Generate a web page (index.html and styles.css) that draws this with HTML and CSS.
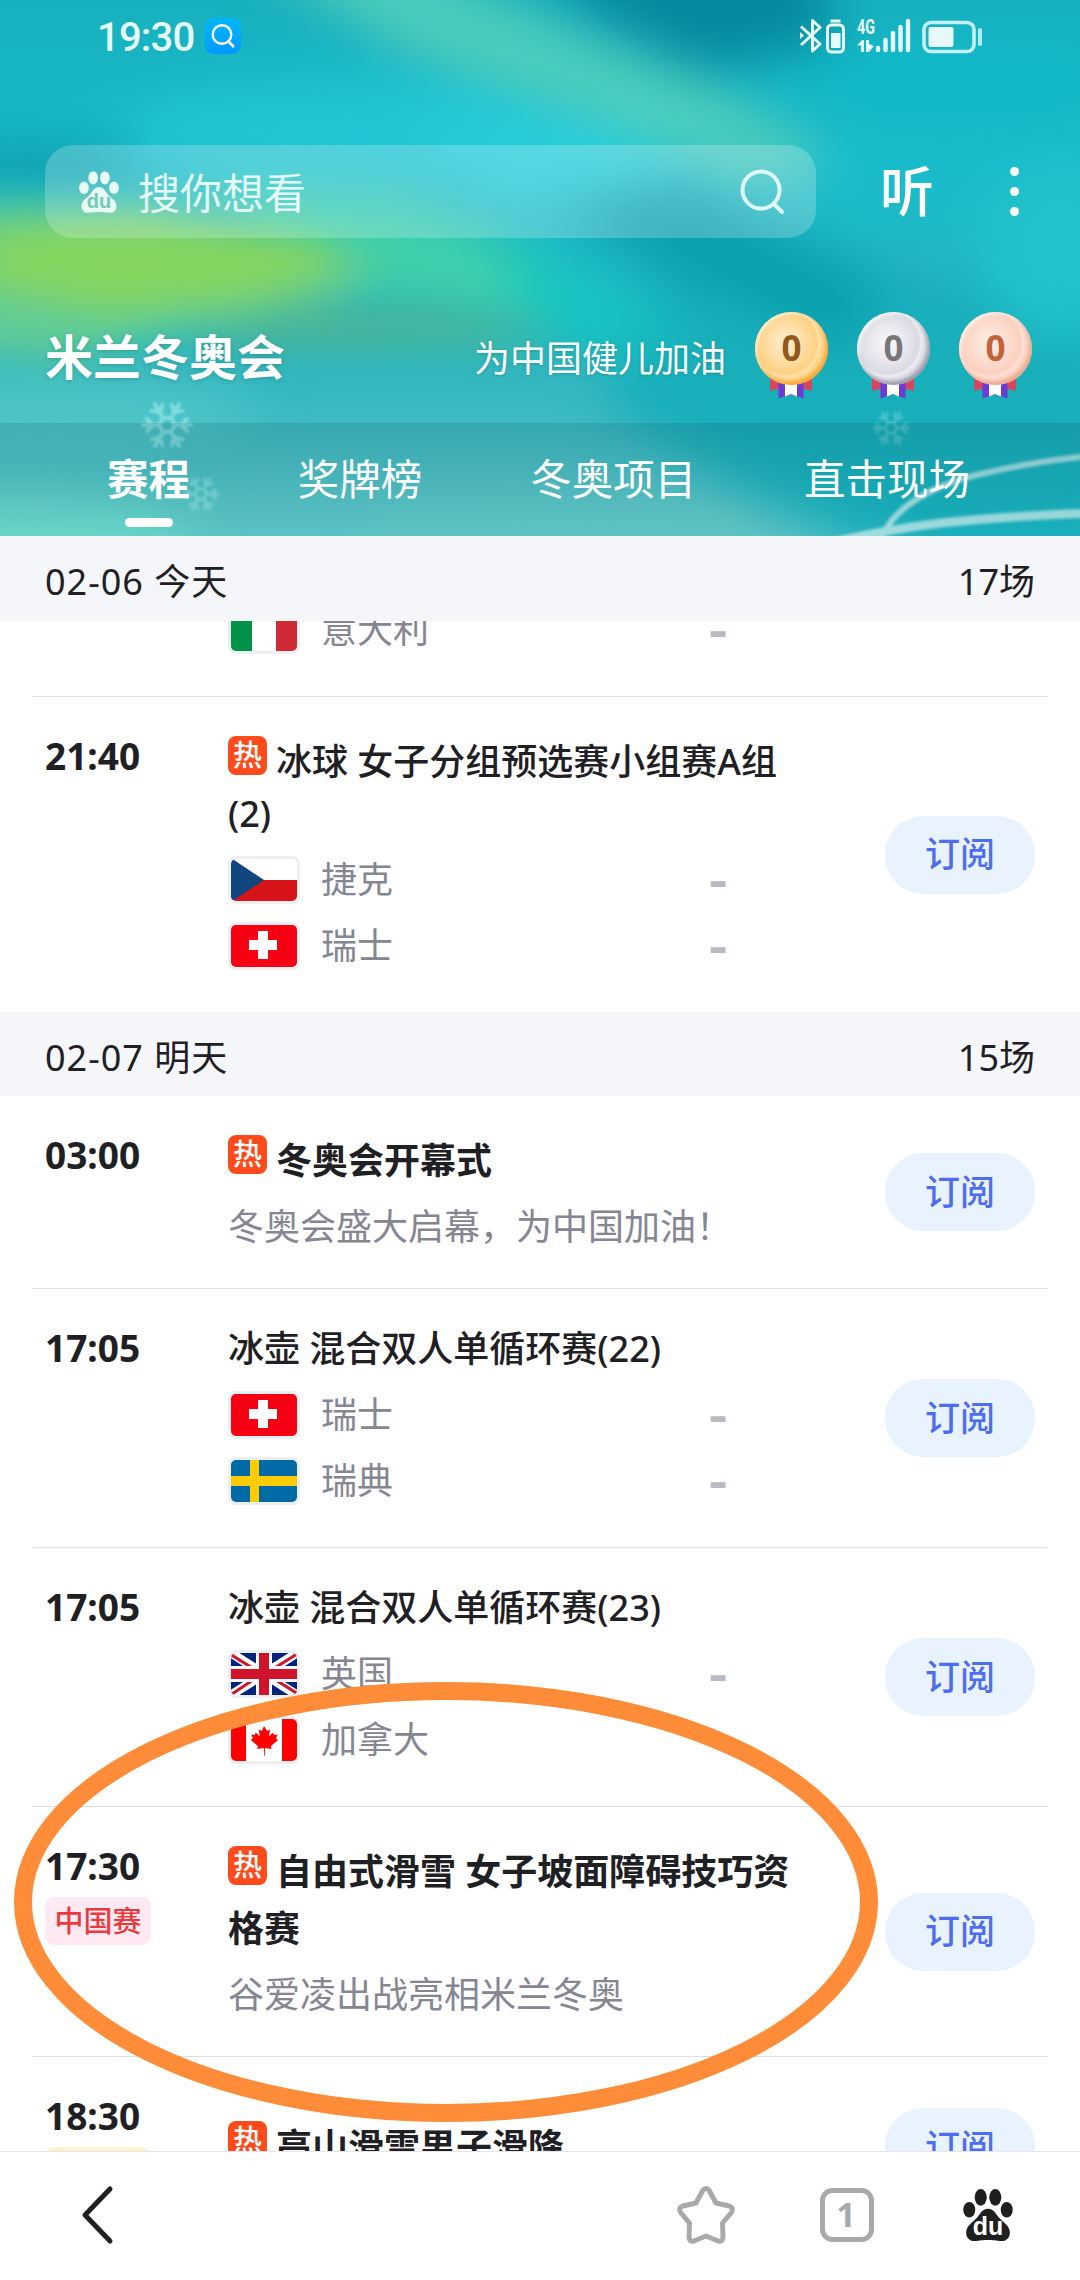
FILE: index.html
```html
<!DOCTYPE html>
<html lang="zh-CN">
<head>
  <meta charset="UTF-8">
  <meta name="viewport" content="width=device-width, initial-scale=1.0">
  <title>米兰冬奥会</title>
  <link rel="stylesheet" href="styles.css">
</head>
<body>
  <!-- Shared shapes: flags, paw logo, snowflake, medal ribbon -->
  <svg class="defs" aria-hidden="true">
    <symbol id="flag-italy" viewBox="0 0 66 42">
      <rect width="66" height="42" fill="#fff"/>
      <rect width="21" height="42" fill="#009246"/>
      <rect x="45" width="21" height="42" fill="#ce2b37"/>
    </symbol>
    <symbol id="flag-czech" viewBox="0 0 66 42">
      <rect width="66" height="42" fill="#fff"/>
      <rect y="21" width="66" height="21" fill="#d7141a"/>
      <path d="M0 -1L33 21L0 43Z" fill="#11457e"/>
    </symbol>
    <symbol id="flag-swiss" viewBox="0 0 66 42">
      <rect width="66" height="42" fill="#f60014"/>
      <path d="M27 6h10v9h9v10h-9v9h-10v-9h-9v-10h9z" fill="#fff"/>
    </symbol>
    <symbol id="flag-sweden" viewBox="0 0 66 42">
      <rect width="66" height="42" fill="#006aa7"/>
      <path d="M19 0h9v16h38v10h-38v16h-9v-16h-19v-10h19z" fill="#fecc00"/>
    </symbol>
    <symbol id="flag-uk" viewBox="0 0 66 42">
      <rect width="66" height="42" fill="#00247d"/>
      <path d="M0 0L66 42M66 0L0 42" stroke="#fff" stroke-width="9"/>
      <path d="M-1 1L27 18.5M42 16L66 1M67 41L40 24M25 25L1 41" stroke="#cf142b" stroke-width="3"/>
      <path d="M33 0V42M0 21H66" stroke="#fff" stroke-width="16"/>
      <path d="M33 0V42M0 21H66" stroke="#cf142b" stroke-width="10"/>
    </symbol>
    <symbol id="flag-canada" viewBox="0 0 66 42">
      <rect width="66" height="42" fill="#fff"/>
      <rect width="15" height="42" fill="#f00"/>
      <rect x="51" width="15" height="42" fill="#f00"/>
      <path d="M33 7l3 5 3-1.500-1 7 4-4 1 2.500 3.500-.5-1.500 4 2 1.500-7 6 .5 3-6.500-1-.3 8h-.6l-.3-8-6.500 1 .5-3-7-6 2-1.500-1.500-4 3.500.5 1-2.500 4 4-1-7 3 1.500z" fill="#f00"/>
    </symbol>
    <symbol id="paw" viewBox="0 0 48 50">
      <ellipse cx="17" cy="8" rx="5.800" ry="8"/>
      <ellipse cx="31" cy="8" rx="5.800" ry="8"/>
      <ellipse cx="6" cy="20" rx="5.800" ry="7.500"/>
      <ellipse cx="42" cy="20" rx="5.800" ry="7.500"/>
      <path d="M24 19c5 0 7 4 10 8 4 5 11 8 11 15 0 6-5 9-10 8-4-.6-7-1-11-1s-7 .4-11 1c-5 1-10-2-10-8 0-7 7-10 11-15 3-4 5-8 10-8z"/>
    </symbol>
    <symbol id="snowflake" viewBox="-26 -26 52 52">
      <g fill="none" stroke="currentColor" stroke-width="4" stroke-linecap="round">
        <path d="M8 0L4 7H-4L-8 0L-4 -7H4Z"/>
        <g id="snow-arm"><path d="M8 0H24M14 0l6 -6M14 0l6 6"/></g>
        <use href="#snow-arm" transform="rotate(60)"/>
        <use href="#snow-arm" transform="rotate(120)"/>
        <use href="#snow-arm" transform="rotate(180)"/>
        <use href="#snow-arm" transform="rotate(240)"/>
        <use href="#snow-arm" transform="rotate(300)"/>
      </g>
    </symbol>
    <symbol id="ribbon" viewBox="0 0 44 24">
      <path d="M1 0h42v13l-6-2-6 2H13l-6-2-6 2z" fill="#d9455f"/>
      <path d="M9.500 4h25v16.500l-6-2-6.500-2-6.500 2-6 2z" fill="#6b3bd6"/>
      <path d="M16 4h12v14.500l-6-2.500-6 2.500z" fill="#fff"/>
    </symbol>
  </svg>

  <div class="phone">
    <header class="header">
      <!-- Aurora background -->
      <svg class="aurora" viewBox="0 0 1080 536" preserveAspectRatio="none" aria-hidden="true">
        <defs>
          <linearGradient id="base" x1="0" y1="0" x2="0" y2="1">
            <stop offset="0" stop-color="#18b0be"/>
            <stop offset="0.3" stop-color="#18bccb"/>
            <stop offset="0.65" stop-color="#2cb5bf"/>
            <stop offset="1" stop-color="#5cc2c5"/>
          </linearGradient>
        </defs>
        <rect width="1080" height="536" fill="url(#base)"/>
        <g class="blur-wide">
          <ellipse cx="380" cy="130" rx="260" ry="50" fill="#22c4d3"/>
          <path d="M680 200L1120 330V600L860 560L600 400Z" fill="#18aeba"/>
          <path d="M560 220L680 180L880 290L850 350Z" fill="#0a9fae"/>
          <path d="M490 -80H800L840 40L700 70L600 20Z" fill="#04899f"/>
          <path d="M400 125L620 120L720 170L500 200Z" fill="#28cdda"/>
          <path d="M230 -60L410 -40L560 25L700 80L840 160L760 185L600 120L400 50Z" fill="#4fccbb"/>
          <ellipse cx="960" cy="80" rx="160" ry="40" fill="#10b8c8"/>
          <ellipse cx="1060" cy="250" rx="80" ry="90" fill="#22c2cb"/>
          <ellipse cx="10" cy="165" rx="130" ry="26" fill="#10a0af"/>
          <path d="M200 190L400 200L560 260L640 320L480 320L300 280Z" fill="#3ed0aa"/>
          <path d="M490 240L600 280L700 350L560 340Z" fill="#12c6c2"/>
          <ellipse cx="40" cy="415" rx="220" ry="36" fill="#4fc6c8"/>
          <ellipse cx="20" cy="550" rx="180" ry="50" fill="#68d6c6"/>
          <ellipse cx="600" cy="540" rx="240" ry="30" fill="#62c2c4"/>
        </g>
        <g class="blur-soft">
          <path d="M-60 200L120 205L300 232L390 265L320 305L190 330L60 360L-60 350Z" fill="#62cc96"/>
          <path d="M170 340L300 305L440 308L560 335L420 350L300 352Z" fill="#48b498"/>
          <path d="M-20 232L150 215L300 238L355 260L260 298L110 312L-20 285Z" fill="#86d560"/>
        </g>
        <g class="ski-lines">
          <path d="M880 542C892 506 935 484 985 473S1060 459 1090 456" stroke-width="6"/>
          <path d="M820 546C900 524 980 517 1090 513" stroke-width="9"/>
        </g>
      </svg>

      <div class="status-bar">
        <span class="clock">19:30</span>
        <svg class="app-dot" viewBox="0 0 36 36">
          <defs>
            <linearGradient id="dot" x1="0" y1="0" x2="0" y2="1">
              <stop offset="0" stop-color="#00b8ff"/>
              <stop offset="1" stop-color="#0098ff"/>
            </linearGradient>
          </defs>
          <rect width="36" height="36" rx="9" fill="url(#dot)"/>
          <path d="M22.500 22.500L29 29" stroke="#fff" stroke-width="2.600"/>
          <circle cx="17" cy="16.500" r="9.300" fill="none" stroke="#fff" stroke-width="2.400"/>
        </svg>
        <svg class="status-icons" viewBox="0 0 184 36">
          <!-- bluetooth + its battery -->
          <g fill="none" stroke="#e6fbfc" stroke-width="3" stroke-linejoin="round">
            <path d="M1 8.500L20 26L12.500 33V2.500L20 9.500L1 27"/>
            <rect x="27.500" y="7" width="16" height="27" rx="4"/>
          </g>
          <path d="M0 14l4 3.500-4 3.500zM30.500 1.500h10v3h-10zM31 15h9.500v15h-9.500z" fill="#e6fbfc"/>
          <!-- mobile signal -->
          <text x="57" y="16" class="net" textLength="18" lengthAdjust="spacingAndGlyphs">4G</text>
          <path d="M57 27.500l5-5.500h2v12h-3v-6.500zM66 22h3v4l5 2-5 6h-3z" fill="#e6fbfc"/>
          <g stroke="#e6fbfc" stroke-width="4.400" stroke-linecap="round">
            <path d="M78 30V32M85.500 22V32M93 15V32M100.500 9V32M108 3V32"/>
          </g>
          <!-- phone battery -->
          <rect x="124" y="4.500" width="50" height="29" rx="7" fill="none" stroke="#c5f0f2" stroke-width="3.600"/>
          <rect x="128.500" y="9" width="25" height="20" rx="2" fill="#e6f8f8"/>
          <path d="M180 12V26" stroke="#b5ecef" stroke-width="4" stroke-linecap="round"/>
        </svg>
      </div>

      <div class="search-row">
        <div class="search-box">
          <svg class="search-paw" viewBox="0 0 48 50">
            <use href="#paw"/>
            <text x="24" y="44" text-anchor="middle" class="du du-teal">du</text>
          </svg>
          <span class="search-hint">搜你想看</span>
          <svg class="search-icon" viewBox="0 0 46 46">
            <circle cx="21" cy="21" r="18.500"/>
            <path d="M34 35L42 43"/>
          </svg>
        </div>
        <span class="listen">听</span>
        <span class="more"><i></i><i></i><i></i></span>
      </div>

      <div class="title-row">
        <h1>米兰冬奥会</h1>
        <span class="cheer">为中国健儿加油</span>
        <div class="medals">
          <div class="medal gold"><span>0</span><svg><use href="#ribbon"/></svg></div>
          <div class="medal silver"><span>0</span><svg><use href="#ribbon"/></svg></div>
          <div class="medal bronze"><span>0</span><svg><use href="#ribbon"/></svg></div>
        </div>
      </div>

      <svg class="snow snow-big"><use href="#snowflake"/></svg>
      <svg class="snow snow-mid"><use href="#snowflake"/></svg>
      <svg class="snow snow-right"><use href="#snowflake"/></svg>

      <nav class="tabs">
        <a class="tab active">赛程</a>
        <a class="tab">奖牌榜</a>
        <a class="tab">冬奥项目</a>
        <a class="tab">直击现场</a>
      </nav>
    </header>

    <main class="schedule">
      <div class="date-bar"><span class="date">02-06 今天</span><span>17场</span></div>

      <!-- Row scrolled half under the date bar -->
      <div class="match match-cut">
        <div class="info">
          <div class="team"><svg class="flag"><use href="#flag-italy"/></svg><span>意大利</span><b>-</b></div>
        </div>
      </div>

      <div class="match">
        <div class="time">21:40</div>
        <div class="info">
          <div class="title with-hot"><span class="hot">热</span>冰球 女子分组预选赛小组赛A组(2)</div>
          <div class="team"><svg class="flag"><use href="#flag-czech"/></svg><span>捷克</span><b>-</b></div>
          <div class="team"><svg class="flag"><use href="#flag-swiss"/></svg><span>瑞士</span><b>-</b></div>
        </div>
        <button class="subscribe">订阅</button>
      </div>

      <div class="date-bar date-next"><span class="date">02-07 明天</span><span>15场</span></div>

      <div class="match">
        <div class="time">03:00</div>
        <div class="info">
          <div class="title headline"><span class="hot">热</span>冬奥会开幕式</div>
          <div class="desc">冬奥会盛大启幕，为中国加油！</div>
        </div>
        <button class="subscribe">订阅</button>
      </div>

      <div class="match">
        <div class="time">17:05</div>
        <div class="info">
          <div class="title">冰壶 混合双人单循环赛(22)</div>
          <div class="team"><svg class="flag"><use href="#flag-swiss"/></svg><span>瑞士</span><b>-</b></div>
          <div class="team"><svg class="flag"><use href="#flag-sweden"/></svg><span>瑞典</span><b>-</b></div>
        </div>
        <button class="subscribe">订阅</button>
      </div>

      <div class="match">
        <div class="time">17:05</div>
        <div class="info">
          <div class="title">冰壶 混合双人单循环赛(23)</div>
          <div class="team"><svg class="flag"><use href="#flag-uk"/></svg><span>英国</span><b>-</b></div>
          <div class="team"><svg class="flag"><use href="#flag-canada"/></svg><span>加拿大</span></div>
        </div>
        <button class="subscribe">订阅</button>
      </div>

      <div class="match">
        <div class="time">17:30<span class="tag tag-china">中国赛</span></div>
        <div class="info">
          <div class="title headline"><span class="hot">热</span>自由式滑雪 女子坡面障碍技巧资格赛</div>
          <div class="desc">谷爱凌出战亮相米兰冬奥</div>
        </div>
        <button class="subscribe">订阅</button>
      </div>

      <div class="match match-last">
        <div class="time">18:30<span class="tag tag-gold"></span></div>
        <div class="info">
          <div class="title headline"><span class="hot">热</span>高山滑雪男子滑降</div>
        </div>
        <button class="subscribe">订阅</button>
      </div>
    </main>

    <footer class="toolbar">
      <svg class="tool-icon back" viewBox="0 0 60 60"><path d="M43 4L18 30L43 56"/></svg>
      <svg class="tool-icon star" viewBox="0 0 60 60">
        <path d="M26.500 6Q30 1 33.500 6L40 18L53 21Q58.500 23 55 28L46.500 38L47 52Q47 57 42 56L30 51L18 56Q13 57 13 52L13.500 38L5 28Q1.500 23 7 21L20 18Z"/>
      </svg>
      <svg class="tool-icon pages" viewBox="0 0 60 60">
        <rect x="5.500" y="5.500" width="49" height="49" rx="10"/>
        <text x="29" y="42" text-anchor="middle">1</text>
      </svg>
      <svg class="tool-icon home" viewBox="0 0 48 50">
        <use href="#paw"/>
        <text x="24" y="44" text-anchor="middle" class="du du-white">du</text>
      </svg>
    </footer>

    <!-- Hand-drawn highlight around the 17:30 match -->
    <svg class="circle-mark" viewBox="0 0 864 440" aria-hidden="true">
      <ellipse cx="432" cy="220" rx="423" ry="211"/>
    </svg>
  </div>
</body>
</html>
```
FILE: styles.css
```css
* {
  box-sizing: border-box;
}

body {
  margin: 0;
  background: #fff;
  color: #1f2024;
  font-family: "Noto Sans", "Noto Sans CJK SC", sans-serif;
  font-size: 36px;
}

.defs {
  position: absolute;
  width: 0;
  height: 0;
}

.phone {
  position: relative;
  width: 1080px;
  height: 2280px;
  display: flex;
  flex-direction: column;
  overflow: hidden;
}

/* Header */
.header {
  position: relative;
  flex: none;
  height: 536px;
  display: flex;
  flex-direction: column;
  color: #fff;
  overflow: hidden;
}

.aurora {
  position: absolute;
  top: 0;
  left: 0;
  width: 1080px;
  height: 536px;
}

.blur-wide {
  filter: blur(25px);
}

.blur-soft {
  filter: blur(18px);
}

.ski-lines {
  fill: none;
  stroke: #d5eeee;
  opacity: 0.7;
  filter: blur(1.5px);
}

.status-bar {
  position: relative;
  display: flex;
  align-items: center;
  height: 72px;
  padding: 0 96px 0 97px;
}

.clock {
  width: 108px;
  font-family: Roboto, sans-serif;
  font-size: 40px;
  font-weight: 500;
  letter-spacing: -0.8px;
  line-height: 72px;
  margin-top: 4px;
  color: #e6fbfc;
}

.app-dot {
  width: 36px;
  height: 36px;
}

.status-icons {
  width: 184px;
  height: 36px;
  margin-left: auto;
}

.net {
  font-family: Roboto, sans-serif;
  font-size: 21px;
  font-weight: 700;
  fill: #e6fbfc;
}

.search-row {
  position: relative;
  display: flex;
  align-items: center;
  height: 93px;
  margin-top: 73px;
  padding-left: 45px;
}

.search-box {
  display: flex;
  align-items: center;
  width: 771px;
  height: 93px;
  padding: 0 30px 0 34px;
  border-radius: 28px;
  background: rgba(255, 255, 255, 0.22);
}

.search-paw {
  width: 40px;
  height: 42px;
  fill: #e8faf6;
}

.du {
  font-family: "Liberation Sans", sans-serif;
  font-size: 24px;
  font-weight: 700;
}

.du-teal {
  fill: #6fc9b4;
}

.du-white {
  fill: #fff;
}

.search-hint {
  margin-left: 19px;
  font-size: 42px;
  line-height: 60px;
  margin-top: 2px;
  color: #e4fbf8;
}

.search-icon {
  width: 46px;
  height: 46px;
  margin-left: auto;
  fill: none;
  stroke: #dff9fb;
  stroke-width: 4;
  stroke-linecap: round;
}

.listen {
  margin-left: 64px;
  font-size: 54px;
  font-weight: 500;
  line-height: 93px;
}

.more {
  display: flex;
  flex-direction: column;
  gap: 11px;
  margin-left: 76px;
}

.more i {
  width: 9px;
  height: 9px;
  border-radius: 50%;
  background: #fff;
}

.title-row {
  position: relative;
  display: flex;
  align-items: center;
  height: 94px;
  margin-top: 71px;
  padding: 0 48px 0 45px;
}

.title-row h1 {
  margin: 1px 0 0;
  font-size: 48px;
  font-weight: 700;
  line-height: 94px;
  text-shadow: 0 1px 4px rgba(0, 70, 80, 0.25);
}

.cheer {
  margin-left: auto;
  text-shadow: 0 1px 3px rgba(0, 70, 80, 0.25);
}

.medals {
  display: flex;
  gap: 29px;
  margin-left: 29px;
}

.medal {
  position: relative;
  width: 73px;
  height: 88px;
}

.medal span {
  position: relative;
  z-index: 1;
  display: block;
  height: 73px;
  border-radius: 50%;
  text-align: center;
  font-size: 35px;
  font-weight: 700;
  line-height: 72px;
}

/* Ribbon hangs out from behind the disc */
.medal svg {
  position: absolute;
  left: 14px;
  top: 66px;
  width: 44px;
  height: 24px;
}

.gold span {
  color: #8f5b1c;
  background: radial-gradient(circle at 42% 42%, #fff0d4, #ffd083 52%, #ffe0a6 56%, #ffcd78 70%);
  box-shadow: inset -2px -3px 4px #f7a22c, inset 2px 2px 3px #fff0cd;
}

.silver span {
  color: #77777b;
  background: radial-gradient(circle at 42% 42%, #fafafc, #dadae2 52%, #ececf1 56%, #cccdd6 70%);
  box-shadow: inset -2px -3px 4px #9596a6, inset 2px 2px 3px #f7f7fa;
}

.bronze span {
  color: #c4633b;
  background: radial-gradient(circle at 42% 42%, #ffefe8, #fbd0bf 52%, #fde0d4 56%, #f8cbb8 70%);
  box-shadow: inset -2px -3px 4px #e9a58c, inset 2px 2px 3px #fff1ea;
}

.snow {
  position: absolute;
  color: #aef0f2;
  opacity: 0.55;
  filter: blur(0.8px);
}

.snow-big {
  left: 141px;
  top: 399px;
  width: 52px;
  height: 52px;
}

.snow-mid {
  left: 182px;
  top: 474px;
  width: 38px;
  height: 40px;
  opacity: 0.4;
}

.snow-right {
  left: 872px;
  top: 408px;
  width: 38px;
  height: 40px;
  opacity: 0.3;
}

.tabs {
  position: relative;
  display: flex;
  justify-content: space-between;
  height: 113px;
  margin-top: auto;
  padding: 0 110px 0 107px;
  background: linear-gradient(rgba(0, 60, 70, 0.15), rgba(0, 60, 70, 0));
}

.tab {
  display: flex;
  flex-direction: column;
  align-items: center;
  font-size: 41.500px;
  line-height: 60px;
  padding-top: 26px;
}

.tab.active {
  font-weight: 700;
}

.tab.active::after {
  content: "";
  width: 48px;
  height: 9px;
  margin-top: 9px;
  border-radius: 5px;
  background: #fff;
}

/* Schedule list */
.schedule {
  flex: 1;
  overflow: hidden;
}

.date-bar {
  display: flex;
  justify-content: space-between;
  align-items: center;
  height: 85px;
  padding: 2px 45px 0;
  background: #f5f6fa;
}

.date-next {
  height: 84px;
}

.date {
  letter-spacing: 1px;
}

.match {
  display: grid;
  grid-template-columns: 183px 570px 1fr;
  margin: 0 33px;
  padding: 39px 12px 42px;
  border-bottom: 1px solid #dfdfe1;
}

.match-cut {
  height: 76px;
  padding: 0 12px 42px;
  align-content: end;
  overflow: hidden;
}

.match-cut .info {
  grid-column: 2;
}

.match:has(+ .date-bar) {
  border-bottom: none;
}

.time {
  font-size: 37px;
  font-weight: 700;
  line-height: 39px;
}

.tag {
  display: block;
  width: 106px;
  height: 48px;
  margin-top: 12px;
  border-radius: 9px;
  font-size: 29px;
  font-weight: 500;
  line-height: 47px;
  text-align: center;
}

.tag-china {
  background: #ffe9f2;
  color: #ec3a3c;
}

.tag-gold {
  background: #fdf3d0;
}

.title {
  padding-bottom: 5px;
  font-weight: 500;
  line-height: 42px;
}

.title.with-hot {
  padding-bottom: 0;
  line-height: 52px;
}

.title.headline {
  margin-top: -3px;
  padding-bottom: 0;
  font-weight: 700;
  line-height: 57px;
}

.hot {
  display: inline-block;
  width: 39px;
  height: 39px;
  margin-right: 9px;
  border-radius: 8px;
  background: #ff4a1c;
  color: #fff;
  font-size: 29px;
  font-weight: 500;
  line-height: 38px;
  text-align: center;
  vertical-align: top;
}

.headline .hot {
  margin-top: 3px;
}

.team {
  display: grid;
  grid-template-columns: 72px 1fr 40px;
  grid-template-rows: 48px;
  column-gap: 21px;
  align-items: center;
  width: 510px;
  height: 48px;
  margin-top: 16px;
  color: #858692;
  line-height: 48px;
}

.team + .team {
  margin-top: 18px;
}

.team b {
  font-family: Inter, sans-serif;
  font-size: 44px;
  font-weight: 800;
  line-height: 44px;
  margin-top: 2px;
  text-align: center;
  color: #b8b9c1;
}

.flag {
  width: 72px;
  height: 48px;
  border: 3px solid #eeeff1;
  border-radius: 8px;
}

.desc {
  margin-top: 19px;
  color: #858692;
  line-height: 38px;
}

.subscribe {
  align-self: center;
  justify-self: end;
  width: 150px;
  height: 78px;
  margin-top: 3px;
  padding: 0 0 6px;
  border: none;
  border-radius: 38px;
  background: #e8f3ff;
  color: #4e6ef2;
  font-family: inherit;
  font-size: 35px;
  font-weight: 500;
}

.match-last {
  height: 174px;
  border-bottom: none;
}

.match-last .info {
  margin-top: 25px;
}

/* Bottom toolbar */
.toolbar {
  flex: none;
  display: flex;
  align-items: center;
  height: 129px;
  padding: 0 67px 0 67px;
  border-top: 1px solid #e6e6e8;
  background: #fff;
}

.tool-icon {
  width: 60px;
  height: 60px;
  margin-bottom: 2px;
  fill: none;
  stroke: #a8a9ab;
  stroke-width: 5;
  stroke-linecap: round;
  stroke-linejoin: round;
}

.back {
  margin-right: auto;
  stroke: #1f2024;
}

.star {
  margin-right: 81px;
}

.pages {
  margin-right: 86px;
}

.pages text {
  font-family: "Noto Sans", sans-serif;
  font-size: 34px;
  font-weight: 700;
  fill: #a8a9ab;
  stroke: none;
}

.home {
  width: 50px;
  height: 52px;
  fill: #1f1f1f;
  stroke: none;
}

.circle-mark {
  position: absolute;
  left: 14px;
  top: 1682px;
  width: 864px;
  height: 440px;
  fill: none;
  stroke: #ff8c39;
  stroke-width: 18;
}
```
